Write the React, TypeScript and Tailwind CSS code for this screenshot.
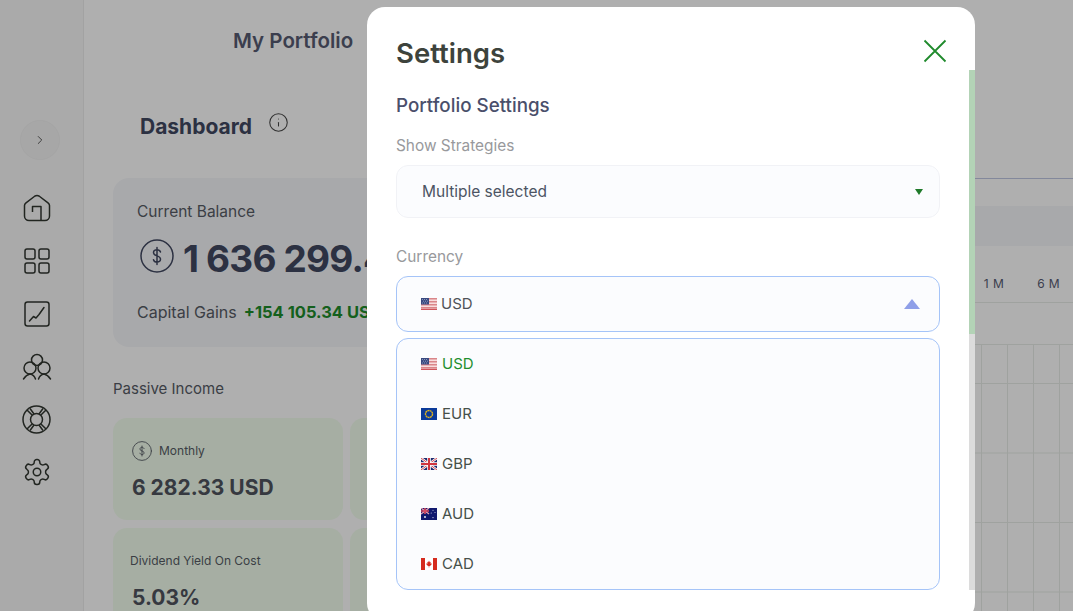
import React from "react";
import { ChevronRight, Info } from "lucide-react";

const Flag = ({ code }: { code: string }) => {
  if (code === "USD") {
    return (
      <svg width="16" height="12" viewBox="0 0 16 12" className="shrink-0">
        <rect width="16" height="12" fill="#f8dcdc" />
        <rect y="0" width="16" height="1.5" fill="#d9868a" />
        <rect y="3" width="16" height="1.5" fill="#d9868a" />
        <rect y="6" width="16" height="1.5" fill="#d9868a" />
        <rect y="9" width="16" height="1.5" fill="#d9868a" />
        <rect y="10.8" width="16" height="1.2" fill="#d0555b" />
        <rect width="8" height="6.5" fill="#3a4a80" />
        <path d="M1 1.5h1M3 1.5h1M5 1.5h1M2 3.2h1M4 3.2h1M6 3.2h1M1 5h1M3 5h1M5 5h1" stroke="#aab4d4" strokeWidth="0.7" />
      </svg>
    );
  }
  if (code === "EUR") {
    return (
      <svg width="16" height="12" viewBox="0 0 16 12" className="shrink-0">
        <rect width="16" height="12" fill="#0a3a9a" />
        <circle cx="8" cy="6" r="3.5" fill="none" stroke="#e0b31c" strokeWidth="1.4" strokeDasharray="2 0.4" />
      </svg>
    );
  }
  if (code === "GBP") {
    return (
      <svg width="16" height="12" viewBox="0 0 16 12" className="shrink-0">
        <rect width="16" height="12" fill="#1d2a6e" />
        <path d="M0 0L16 12M16 0L0 12" stroke="#fff" strokeWidth="2.4" />
        <path d="M0 0L16 12M16 0L0 12" stroke="#d0343f" strokeWidth="0.9" />
        <path d="M8 0V12M0 6H16" stroke="#fff" strokeWidth="3.6" />
        <path d="M8 0V12M0 6H16" stroke="#d0343f" strokeWidth="2" />
      </svg>
    );
  }
  if (code === "AUD") {
    return (
      <svg width="16" height="12" viewBox="0 0 16 12" className="shrink-0">
        <rect width="16" height="12" fill="#10186e" />
        <path d="M0 0L8 6M8 0L0 6" stroke="#e8a0b0" strokeWidth="1.3" />
        <path d="M4 0V6M0 3H8" stroke="#d8485f" strokeWidth="1.6" />
        <circle cx="4" cy="9" r="0.9" fill="#fff" />
        <circle cx="12" cy="2.2" r="0.5" fill="#dfe2f5" />
        <circle cx="10.2" cy="5" r="0.5" fill="#dfe2f5" />
        <circle cx="14" cy="4.6" r="0.5" fill="#dfe2f5" />
        <circle cx="12" cy="9.6" r="0.6" fill="#dfe2f5" />
      </svg>
    );
  }
  return (
    <svg width="16" height="12" viewBox="0 0 16 12" className="shrink-0">
      <rect width="16" height="12" fill="#fff" />
      <rect width="4" height="12" fill="#d52b1e" />
      <rect x="12" width="4" height="12" fill="#d52b1e" />
      <path d="M8 2.6l.8 1.6.9-.4-.3 2 1-.5.4.9-1.4 1.1.2.7H8.3V9.4h-.6V8h-1.3l.2-.7-1.4-1.1.4-.9 1 .5-.3-2 .9.4z" fill="#d52b1e" />
    </svg>
  );
};

const DollarCircle = ({ size, color, className }: { size: number; color: string; className?: string }) => (
  <svg width={size} height={size} viewBox="0 0 34 34" fill="none" stroke={color} strokeWidth="1.5" strokeLinecap="round" className={className}>
    <circle cx="17" cy="17" r="16" />
    <path d="M20.500 13c-.5-1.400-1.900-2.300-3.500-2.300-2.100 0-3.500 1.200-3.500 3 0 4.100 7 2.300 7 6.400 0 1.800-1.500 3-3.500 3-1.700 0-3.100-.9-3.500-2.400M17 8.500v17" />
  </svg>
);

const navIcons = [
  <svg key="home" width="28" height="28" viewBox="0 0 28 28" fill="none" stroke="#30352f" strokeWidth="1.5" strokeLinejoin="round">
    <path d="M1.500 11.500Q1.500 10 3 8.800L12 2q2-1.200 4 0l9 6.800q1.500 1.200 1.500 2.700V22a4.500 4.500 0 0 1-4.500 4.500H6A4.500 4.500 0 0 1 1.500 22z" />
    <path d="M9.500 18v-5.500h8.500v14" />
  </svg>,
  <svg key="grid" width="28" height="28" viewBox="0 0 28 28" fill="none" stroke="#30352f" strokeWidth="1.5">
    <rect x="2" y="2" width="10" height="10" rx="2" />
    <rect x="16" y="2" width="10" height="10" rx="2" />
    <rect x="2" y="16" width="10" height="10" rx="2" />
    <rect x="16" y="16" width="10" height="10" rx="2" />
  </svg>,
  <svg key="chart" width="28" height="28" viewBox="0 0 28 28" fill="none" stroke="#30352f" strokeWidth="1.5" strokeLinejoin="round" strokeLinecap="round">
    <rect x="2" y="2" width="24" height="24" rx="2.500" />
    <path d="M6.500 21l4-4.500 2.500 1.500 3-3.500 5-7" />
  </svg>,
  <svg key="team" width="30" height="28" viewBox="0 0 30 28" fill="none" stroke="#30352f" strokeWidth="1.5" strokeLinecap="round">
    <circle cx="15" cy="7" r="5.500" />
    <circle cx="8" cy="15" r="6" />
    <circle cx="22" cy="15" r="6" />
    <path d="M1.500 26c2-3 4-4.500 6.500-5 2.500.5 4.500 2 5.500 5M16.500 26c1-3 3-4.500 5.500-5 2.500.5 4.500 2 6.500 5" />
  </svg>,
  <svg key="support" width="29" height="29" viewBox="0 0 29 29" fill="none" stroke="#30352f" strokeWidth="1.5" className="-mt-[1px]">
    <circle cx="14.500" cy="14.500" r="13.500" />
    <circle cx="14.500" cy="14.500" r="6" />
    <path d="M5 5l5.300 5.300M24 5l-5.300 5.300M5 24l5.300-5.300M24 24l-5.300-5.300M8 3.500l4 5.500M21 3.500l-4 5.500M8 25.500l4-5.500M21 25.500l-4-5.500" />
  </svg>,
  <svg key="gear" width="30" height="30" viewBox="0 0 24 24" fill="none" stroke="#30352f" strokeWidth="1.200" strokeLinejoin="round" className="-mt-[2px]">
    <path d="M12.220 2h-.44a2 2 0 0 0-2 2v.180a2 2 0 0 1-1 1.730l-.43.250a2 2 0 0 1-2 0l-.150-.080a2 2 0 0 0-2.730.730l-.220.380a2 2 0 0 0 .730 2.730l.150.100a2 2 0 0 1 1 1.720v.510a2 2 0 0 1-1 1.740l-.150.090a2 2 0 0 0-.730 2.730l.220.380a2 2 0 0 0 2.730.730l.150-.080a2 2 0 0 1 2 0l.430.250a2 2 0 0 1 1 1.730V20a2 2 0 0 0 2 2h.440a2 2 0 0 0 2-2v-.180a2 2 0 0 1 1-1.730l.430-.250a2 2 0 0 1 2 0l.150.080a2 2 0 0 0 2.730-.730l.220-.390a2 2 0 0 0-.730-2.730l-.150-.080a2 2 0 0 1-1-1.740v-.500a2 2 0 0 1 1-1.740l.150-.090a2 2 0 0 0 .730-2.730l-.220-.380a2 2 0 0 0-2.730-.730l-.150.080a2 2 0 0 1-2 0l-.430-.250a2 2 0 0 1-1-1.730V4a2 2 0 0 0-2-2z" />
    <circle cx="12" cy="12" r="3" />
  </svg>,
];

const currencies = ["USD", "EUR", "GBP", "AUD", "CAD"];

const Sidebar = () => (
  <div className="w-[84px] shrink-0 border-r border-[#e8e8e8] bg-[#f4f4f4] flex flex-col items-center pt-[120px] pr-[10px]">
    <div className="w-[40px] h-[40px] ml-[6px] rounded-full bg-[#f0f0f0] border border-[#ececec] flex items-center justify-center">
      <ChevronRight size={14} color="#444" strokeWidth={1.5} />
    </div>
    <div className="mt-[34px] flex flex-col items-center gap-[25px]">
      {navIcons.map((icon) => icon)}
    </div>
  </div>
);

const IncomeCard = ({ label, value, icon }: { label: string; value: string; icon?: boolean }) => (
  <div className="w-[230px] h-[102px] shrink-0 rounded-[14px] bg-[#eefaea] px-[19px] pt-[22px]">
    <div className="h-[22px] flex items-center gap-[7px] text-[12px] text-[#555a63]">
      {icon && <DollarCircle size={20} color="#555a63" />}
      <span className={icon ? "" : "-ml-[2px]"}>{label}</span>
    </div>
    <div className="mt-[11px] text-[21px] leading-[30px] font-bold text-[#4e525c]">{value}</div>
  </div>
);

const Background = () => (
  <div className="flex flex-1 min-w-0">
    <div className="w-[500px] shrink-0 pl-[29px] pt-[25px]">
      <div className="pl-[120px] text-[20.500px] leading-[32px] font-semibold text-[#555a70]">My Portfolio</div>
      <div className="mt-[54px] pl-[27px] flex items-start gap-[16px]">
        <span className="text-[21px] leading-[32px] font-bold text-[#40475f]">Dashboard</span>
        <Info size={21} color="#444" strokeWidth={1.2} className="mt-[1px]" />
      </div>
      <div className="mt-[35px] h-[169px] rounded-[16px] bg-[#f1f2f5] pl-[24px] pt-[24px] overflow-hidden">
        <div className="text-[15.500px] leading-[20px] text-[#555a63]">Current Balance</div>
        <div className="mt-[11px] flex items-start gap-[9px] whitespace-nowrap pl-[3px] h-[52px]">
          <DollarCircle size={34} color="#40475f" className="mt-[6px]" />
          <span className="text-[37px] leading-[52px] tracking-[-0.8px] font-bold text-[#40475f]">1 636 299.47</span>
        </div>
        <div className="mt-[15px] flex items-center gap-[7px] text-[16px] leading-[24px] whitespace-nowrap text-[#555a63]">
          <span>Capital Gains</span>
          <span className="text-[16.500px] font-bold text-[#1d8a2a]">+154 105.34 USD</span>
        </div>
      </div>
      <div className="mt-[32px] text-[15px] leading-[20px] text-[#555a63]">Passive Income</div>
      <div className="mt-[19px] grid grid-cols-[230px_230px] gap-x-[7px] gap-y-[8px]">
        <IncomeCard label="Monthly" value="6 282.33 USD" icon />
        <IncomeCard label="Yearly" value="75 388.00 USD" icon />
        <IncomeCard label="Dividend Yield On Cost" value="5.03%" />
        <IncomeCard label="Dividend Yield" value="4.61%" />
      </div>
    </div>
    <div className="flex-1 min-w-0 pt-[178px]">
      <div className="border-t border-[#bcc3de] h-[28px]" />
      <div className="h-[40px] bg-[#f1f2f5]" />
      <div className="h-[57px] flex items-end justify-end gap-[33px] pr-[13px] pb-[9px] text-[12px] leading-[18px] tracking-[0.4px] text-[#555a70] border-b border-[#e4e8e4]">
        <span>1 M</span>
        <span>6 M</span>
      </div>
      <div className="mt-[41px] h-[267px] border-t border-[#e4e8e4] bg-[linear-gradient(#e4e8e4_1px,transparent_1px),linear-gradient(90deg,#e4e8e4_1px,transparent_1px)] bg-[size:26px_69.500px] bg-[position:7px_38px]" />
    </div>
  </div>
);

const SettingsModal = () => (
  <div className="absolute left-[367px] top-[7px] w-[608px] h-[614px] rounded-[18px] bg-white px-[29px] pt-[27px] overflow-hidden">
    <div className="flex items-start justify-between">
      <h2 className="text-[27.500px] leading-[38px] font-semibold text-[#3d433c]">Settings</h2>
      <svg width="24" height="24" viewBox="0 0 24 24" stroke="#1f8a2c" strokeWidth="1.800" className="-mr-[1px] mt-[5px]">
        <path d="M1.500 1.500L22.500 22.500M22.500 1.500L1.500 22.500" />
      </svg>
    </div>
    <h3 className="mt-[21px] text-[18.800px] leading-[26px] font-medium text-[#4a4f6b]">Portfolio Settings</h3>
    <div className="mt-[17px] text-[15.400px] leading-[20px] text-[#98999c]">Show Strategies</div>
    <div className="mt-[9px] w-[544px] h-[53px] rounded-[12px] border border-[#f1f2f6] bg-[#fbfcfe] flex items-center justify-between pl-[25px] pr-[16px]">
      <span className="text-[15.500px] text-[#4c5463]">Multiple selected</span>
      <svg width="8" height="6" viewBox="0 0 8 6"><path d="M0 0h8L4 6z" fill="#1f7a2a" /></svg>
    </div>
    <div className="mt-[29px] text-[15.400px] leading-[20px] text-[#98999c]">Currency</div>
    <div className="mt-[9px] w-[544px] h-[56px] rounded-[12px] border border-[#a5c4f8] bg-[#fbfcfe] flex items-center justify-between pl-[24px] pr-[19px]">
      <span className="flex items-center gap-[4px] text-[15px] text-[#4f5358]"><Flag code="USD" />USD</span>
      <svg width="16" height="10" viewBox="0 0 16 10"><path d="M8 0l8 10H0z" fill="#8f9fe8" /></svg>
    </div>
    <div className="mt-[6px] w-[544px] h-[252px] rounded-[12px] border border-[#a5c4f8] bg-[#fbfcfe] flex flex-col justify-center pl-[24px]">
      {currencies.map((c) => (
        <div key={c} className={`h-[50px] shrink-0 flex items-center gap-[5px] text-[15px] ${c === "USD" ? "text-[#1f8f2e]" : "text-[#46504a]"}`}>
          <Flag code={c} />
          {c}
        </div>
      ))}
    </div>
    <div className="absolute right-0 top-[63px] w-[6px] h-[520px] bg-[#dcdcdc]">
      <div className="h-[264px] bg-[#b3d3b6]" />
    </div>
  </div>
);

export default function App() {
  return (
    <div className="relative w-[1073px] h-[611px] overflow-hidden bg-[#fbfbfb] flex font-['Inter',sans-serif]">
      <Sidebar />
      <Background />
      <div className="absolute inset-0 bg-black/30" />
      <SettingsModal />
    </div>
  );
}
